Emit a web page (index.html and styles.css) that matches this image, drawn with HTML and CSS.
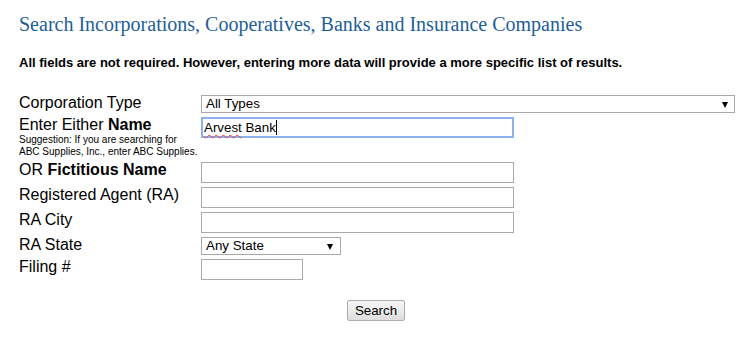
FILE: index.html
```html
<!DOCTYPE html>
<html lang="en">
<head>
<meta charset="utf-8">
<title>Search Incorporations</title>
<link rel="stylesheet" href="styles.css">
</head>
<body>
<h1 class="title">Search Incorporations, Cooperatives, Banks and Insurance Companies</h1>
<p class="note">All fields are not required. However, entering more data will provide a more specific list of results.</p>
<form class="search-form" onsubmit="return false;">
  <div class="rows">
    <div class="row">
      <label class="lbl">Corporation Type</label>
      <span class="select-wrap select-wide"><select class="sel"><option>All Types</option></select></span>
    </div>
    <div class="row">
      <div class="lbl">
        <label>Enter Either <b>Name</b></label>
        <div class="hint">Suggestion: If you are searching for<br>ABC Supplies, Inc., enter ABC Supplies.</div>
      </div>
      <span class="field-wrap">
        <input class="txt txt-wide is-focused" type="text" value="Arvest Bank" spellcheck="false">
        <span class="ink" aria-hidden="true"><span class="typo">Arvest</span> Bank<span class="caret"></span></span>
      </span>
    </div>
    <div class="row">
      <label class="lbl">OR <b>Fictitious Name</b></label>
      <input class="txt txt-wide" type="text">
    </div>
    <div class="row">
      <label class="lbl">Registered Agent (RA)</label>
      <input class="txt txt-wide" type="text">
    </div>
    <div class="row">
      <label class="lbl">RA City</label>
      <input class="txt txt-wide" type="text">
    </div>
    <div class="row">
      <label class="lbl">RA State</label>
      <span class="select-wrap select-state"><select class="sel"><option>Any State</option></select></span>
    </div>
    <div class="row">
      <label class="lbl">Filing #</label>
      <input class="txt txt-short" type="text">
    </div>
  </div>
  <div class="actions"><button class="btn" type="submit">Search</button></div>
</form>
</body>
</html>
```
FILE: styles.css
```css
html, body {
  margin: 0;
  padding: 0;
  background: #ffffff;
}
body {
  padding: 12px 19px 0 19px;
  font-family: "Liberation Sans", Arial, sans-serif;
  color: #000000;
}
.title {
  margin: 0;
  font-family: "Liberation Serif", "Times New Roman", serif;
  font-weight: normal;
  font-size: 20px;
  line-height: 25px;
  color: #1e5f98;
  white-space: nowrap;
}
.note {
  margin: 18px 0 0 0;
  font-size: 13px;
  line-height: 16px;
  font-weight: bold;
  white-space: nowrap;
}
.search-form {
  margin: 23px 0 0 0;
}
.rows {
  display: flex;
  flex-direction: column;
  gap: 3px;
}
.row {
  display: flex;
  align-items: flex-start;
}
.lbl {
  flex: 0 0 182px;
  width: 182px;
  font-size: 16px;
  line-height: 18px;
  color: #000;
}
.lbl b {
  font-weight: bold;
}
.hint {
  font-size: 10px;
  line-height: 12px;
  color: #000;
  white-space: nowrap;
}
.txt {
  box-sizing: border-box;
  height: 21px;
  margin: 1px 0 0 0;
  padding: 1px 2px;
  border: 1px solid #a9a9a9;
  border-radius: 0;
  background: #fff;
  font-family: "Liberation Sans", Arial, sans-serif;
  font-size: 13.33px;
  color: #000;
  outline: none;
}
.txt-wide { width: 313px; }
.txt-short { width: 102px; }
.field-wrap {
  position: relative;
  display: inline-block;
  margin-top: 1px;
}
.field-wrap .txt { margin: 0; display: block; }
.txt.is-focused {
  border: 2px solid #8cb1ee;
  padding: 0 1px;
  color: #000;
}
.ink {
  position: absolute;
  left: 3px;
  top: 2px;
  font-family: "Liberation Sans", Arial, sans-serif;
  font-size: 13.33px;
  line-height: 17px;
  color: transparent;
  white-space: nowrap;
  pointer-events: none;
}
.typo {
  text-decoration: underline wavy #e0403a;
  text-decoration-thickness: 1px;
  text-underline-offset: 2px;
}
.caret {
  display: inline-block;
  width: 1px;
  height: 15px;
  background: #000;
  vertical-align: -3px;
}
.select-wrap {
  position: relative;
  display: inline-block;
  margin-top: 1px;
}
.select-wrap::after {
  content: "";
  position: absolute;
  top: 7px;
  width: 0;
  height: 0;
  border-left: 3.5px solid transparent;
  border-right: 3.5px solid transparent;
  border-top: 6px solid #000;
  pointer-events: none;
}
.select-wide::after { right: 7px; }
.select-state::after { right: 8px; }
.sel {
  -webkit-appearance: none;
  appearance: none;
  box-sizing: border-box;
  display: block;
  height: 18px;
  margin: 0;
  padding: 0 0 0 4px;
  border: 1px solid #a9a9a9;
  border-radius: 0;
  background: #fff;
  font-family: "Liberation Sans", Arial, sans-serif;
  font-size: 13.33px;
  line-height: 16px;
  color: #000;
}
.select-wide .sel { width: 534px; }
.select-state .sel { width: 140px; }
.actions {
  margin-top: 20px;
  text-align: center;
}
.btn {
  box-sizing: border-box;
  width: 58px;
  height: 21px;
  margin: 0;
  padding: 0 6px;
  border: 1px solid #adadad;
  border-radius: 2px;
  background: linear-gradient(#f6f6f6, #dddddd);
  font-family: "Liberation Sans", Arial, sans-serif;
  font-size: 13.33px;
  color: #000;
}
```
